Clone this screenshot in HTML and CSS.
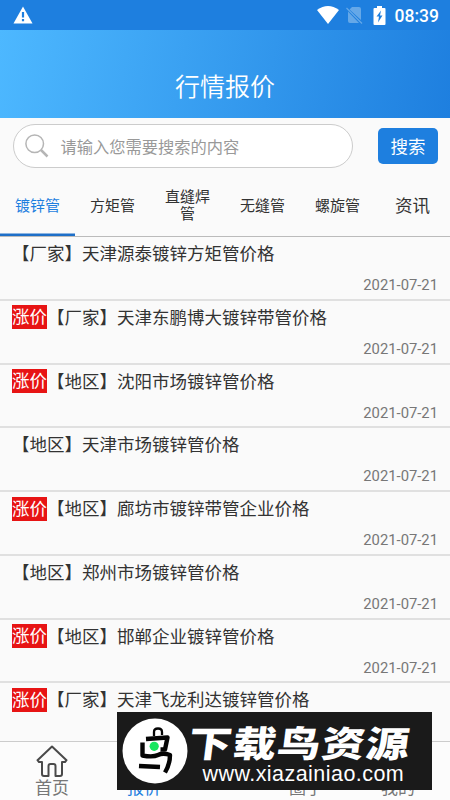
FILE: index.html
```html
<!DOCTYPE html>
<html lang="zh-CN">
<head>
<meta charset="utf-8">
<title>行情报价</title>
<link rel="stylesheet" href="styles.css">
</head>
<body>
<div class="app">
  <div class="status">
    <svg class="warn" width="20" height="18" viewBox="0 0 20 18"><path d="M10 .5 19.5 17.500H.5Z" fill="#fff"/><path d="M10 6v5.500M10 13v2.200" stroke="#1e7fdf" stroke-width="2.200"/></svg>
    <div class="status-right">
      <svg class="wifi" width="22" height="18" viewBox="0 0 22 18"><path d="M0 4Q11-4 22 4L11 18Z" fill="#fff"/></svg>
      <svg class="sim" width="17" height="18" viewBox="0 0 17 18"><path d="M6 1H13Q15 1 15 3V14L3.500 3.500ZM2 5.500 13 17H4Q2 17 2 15Z" fill="#65a8e8"/><path d="M.5 2 16 17.500" stroke="#65a8e8" stroke-width="1.300"/></svg>
      <svg class="battery" width="13" height="19" viewBox="0 0 13 19"><path d="M4 0H9V2H11.500Q12.500 2 12.500 3V18Q12.500 19 11.500 19H1.500Q.5 19 .5 18V3Q.5 2 1.500 2H4Z" fill="#fff"/><path d="M8 4.500 3.500 10.500H6L5 16.500 9.500 9.500H7Z" fill="#1e7fdf"/></svg>
      <span>08:39</span>
    </div>
  </div>
  <header class="header"><h1>行情报价</h1></header>
  <div class="search">
    <div class="field">
      <svg width="24" height="24" viewBox="0 0 24 24" fill="none" stroke="#b5b5b5"><circle cx="9.700" cy="9.700" r="8.800" stroke-width="1.500"/><path d="m16 16 6.500 6.500" stroke-width="2.500"/></svg>
      <span>请输入您需要搜索的内容</span>
    </div>
    <button class="go">搜索</button>
  </div>
  <nav class="tabs">
    <a class="tab active">镀锌管</a><a class="tab">方矩管</a><a class="tab">直缝焊管</a><a class="tab">无缝管</a><a class="tab">螺旋管</a><a class="tab big">资讯</a>
  </nav>
  <main class="list">
    <article class="row"><p>【厂家】天津源泰镀锌方矩管价格</p><time>2021-07-21</time></article>
    <article class="row"><p><b>涨价</b>【厂家】天津东鹏博大镀锌带管价格</p><time>2021-07-21</time></article>
    <article class="row"><p><b>涨价</b>【地区】沈阳市场镀锌管价格</p><time>2021-07-21</time></article>
    <article class="row"><p>【地区】天津市场镀锌管价格</p><time>2021-07-21</time></article>
    <article class="row"><p><b>涨价</b>【地区】廊坊市镀锌带管企业价格</p><time>2021-07-21</time></article>
    <article class="row"><p>【地区】郑州市场镀锌管价格</p><time>2021-07-21</time></article>
    <article class="row"><p><b>涨价</b>【地区】邯郸企业镀锌管价格</p><time>2021-07-21</time></article>
    <article class="row"><p><b>涨价</b>【厂家】天津飞龙利达镀锌管价格</p></article>
  </main>
  <footer class="bottom">
    <a class="item"><svg width="32" height="32" viewBox="0 0 32 32" fill="none" stroke="#4a4a4a" stroke-width="2" stroke-linejoin="round"><path d="M16 1.500 1.500 15.200 3 17H6V29Q6 31 8 31H12.500V21Q12.500 19 14.500 19H17.500Q19.500 19 19.500 21V31H24Q26 31 26 29V17H29L30.500 15.200Z"/></svg><span>首页</span></a>
    <a class="item current"><span>报价</span></a>
    <a class="item third"><span>圈子</span></a>
    <a class="item"><span>我的</span></a>
  </footer>
  <div class="mark">
    <svg class="bird" width="66" height="66" viewBox="0 0 66 66"><circle cx="33" cy="33" r="32.500" fill="#fff"/><g fill="none" stroke="#050505" stroke-width="4.400" stroke-linejoin="round"><path d="M24 21 45.500 19.500 43 31.500H38.500"/><path d="M20.500 24.500V37.500Q31 39.500 36 37T48 37Q48 46 43 54.500"/><path d="M17 48 38 49"/><path d="M32 18V14Q32 10.500 36 10.500T40 14V17" stroke-width="2.300"/></g><circle cx="32.200" cy="28.300" r="4.600" fill="#19e660"/></svg>
    <div class="words"><div class="brand">下载鸟资源</div><div class="url">www.xiazainiao.com</div></div>
  </div>
</div>
</body>
</html>
```
FILE: styles.css
```css
* { box-sizing: border-box; }
body { margin: 0; font-family: Roboto, "Noto Sans CJK SC", sans-serif; color: #333; }
.app { position: relative; width: 450px; height: 800px; overflow: hidden; display: flex; flex-direction: column; background: #fafafa; }
.status { flex: none; height: 30px; background: #1e7fdf; display: flex; justify-content: space-between; align-items: center; padding: 0 11px 0 12.500px; }
.status-right { display: flex; align-items: center; color: #fff; font-size: 17.500px; font-weight: 500; line-height: 30px; }
.status-right span { padding-top: 1px; }
.wifi { margin-right: 7px; }
.sim { margin-right: 10px; }
.battery { margin-right: 9px; }
.header { flex: none; height: 87.500px; background: linear-gradient(100deg, #4db8ff, #1e7fdf); display: flex; justify-content: center; align-items: flex-end; padding-bottom: 12px; }
h1 { margin: 0; font-size: 25px; line-height: 36px; font-weight: 350; color: #fff; }
.search { flex: none; height: 57px; display: flex; justify-content: space-between; align-items: center; padding: 0 12px 0 12.500px; }
.field { width: 340px; height: 44px; border: 1.500px solid #ccc; border-radius: 22px; background: #fff; display: flex; align-items: center; gap: 12px; padding-left: 11px; font-size: 16.250px; color: #999; }
.go { width: 60px; height: 36px; padding: 0 0 2px; border: 0; border-radius: 5px; background: #1e7fdf; color: #fff; font: 17.500px Roboto, "Noto Sans CJK SC", sans-serif; }
.tabs { flex: none; height: 62.500px; display: grid; grid-template-columns: repeat(6, 75px); border-bottom: 1px solid #bbb; }
.tab { display: flex; align-items: center; justify-content: center; text-align: center; padding: 2px 14px 0; font-size: 15px; line-height: 17.500px; }
.tab.active { color: #1e7fdf; box-shadow: inset 0 -2.500px #1e6fc8; }
.tab.big { font-size: 17.500px; }
.list { flex: 1; min-height: 0; overflow: hidden; }
.row { height: 63.750px; border-bottom: 2px solid #e0e0e0; padding: 3px 12px 0; display: flex; flex-direction: column; }
.row p { margin: 0; display: flex; align-items: center; height: 25px; font-size: 17.500px; white-space: nowrap; }
.row b { font-weight: 400; background: #e71414; color: #fff; line-height: 25px; height: 24px; position: relative; top: 1px; }
.row time { align-self: flex-end; margin-top: 10px; font-size: 14.800px; line-height: 20px; color: #777; }
.bottom { flex: none; height: 59px; border-top: 1px solid #ccc; background: #fcfcfc; display: flex; padding: 2px 6px 0; }
.item { width: 92px; display: flex; flex-direction: column; align-items: center; justify-content: flex-end; font-size: 17px; line-height: 23px; color: #777; }
.current { color: #1e7fdf; }
.third { margin-left: auto; }
.mark { position: absolute; left: 117px; top: 712px; width: 315px; height: 78px; background: #1a1a1a; display: flex; align-items: center; padding-left: 5px; color: #fff; }
.words { flex: 1; padding-top: 5px; }
.brand { margin-left: 1px; font: 900 36px/42px "Noto Sans CJK SC", sans-serif; letter-spacing: 1px; transform: scaleX(1.2) skewX(-6deg); transform-origin: left center; white-space: nowrap; }
.url { margin: -1px 0 0 14.500px; font: 21.500px/26px "Liberation Sans", sans-serif; letter-spacing: .45px; white-space: nowrap; }
```
